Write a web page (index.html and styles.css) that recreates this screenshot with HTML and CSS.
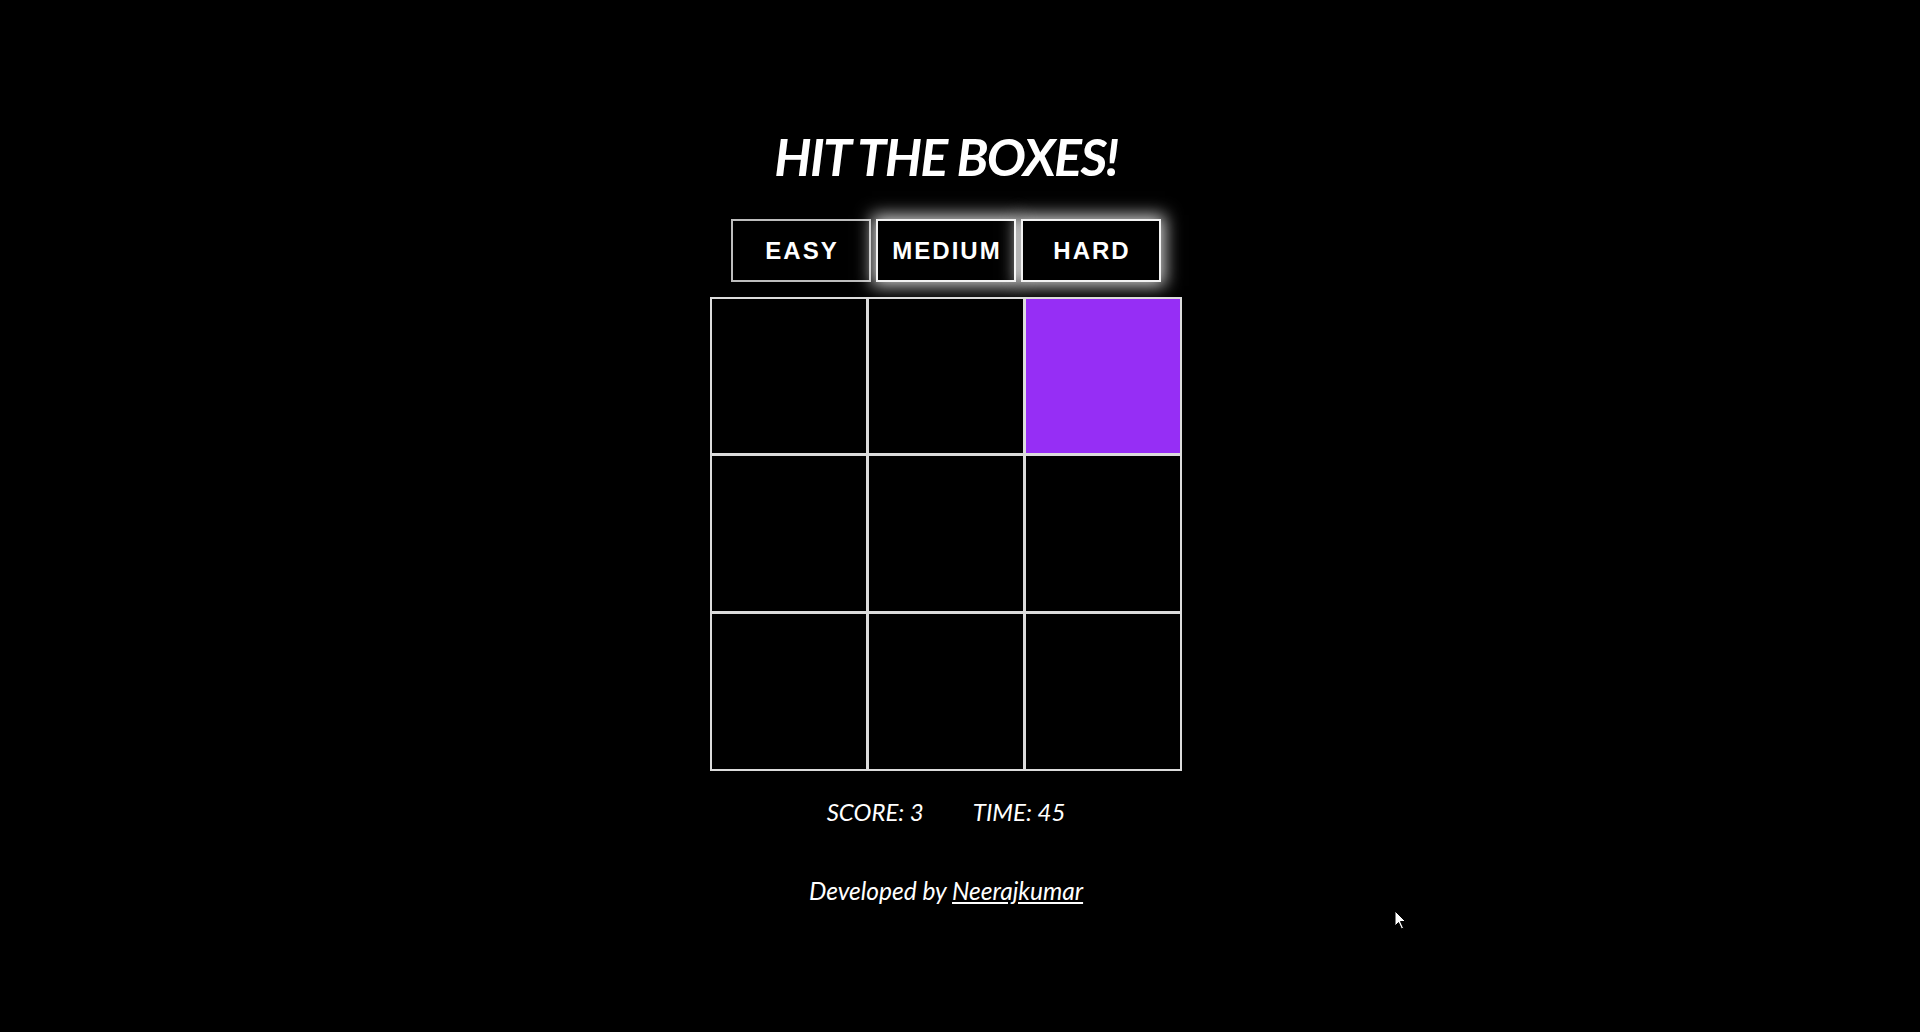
FILE: index.html
```html
<!DOCTYPE html>
<html lang="en">
<head>
<meta charset="utf-8">
<title>Hit the Boxes!</title>
<link rel="stylesheet" href="styles.css">
</head>
<body>
<main class="game">
  <h1 class="title">HIT THE BOXES!</h1>
  <div class="levels">
    <button class="level">EASY</button>
    <button class="level glow">MEDIUM</button>
    <button class="level glow">HARD</button>
  </div>
  <div class="board">
    <div class="cell"></div>
    <div class="cell"></div>
    <div class="cell active"></div>
    <div class="cell"></div>
    <div class="cell"></div>
    <div class="cell"></div>
    <div class="cell"></div>
    <div class="cell"></div>
    <div class="cell"></div>
  </div>
  <div class="stats">
    <span class="stat">SCORE: 3</span>
    <span class="stat">TIME: 45</span>
  </div>
  <p class="credit">Developed by <a href="#" class="author">Neerajkumar</a></p>
</main>
<svg class="cursor" width="13" height="20" viewBox="0 0 13 20" aria-hidden="true">
  <path d="M1 1 L1 16 L4.5 12.5 L7.5 19 L9.5 18 L6.5 11.5 L11.5 11.5 Z" fill="#fff" stroke="#000" stroke-width="1"/>
</svg>
</body>
</html>
```

FILE: styles.css
```css
html, body {
  margin: 0;
  padding: 0;
  background: #000;
  height: 100%;
  overflow: hidden;
}

body {
  color: #fff;
  font-family: Lato, "Open Sans", sans-serif;
}

.game {
  display: flex;
  flex-direction: column;
  align-items: center;
  padding-top: 125px;
  padding-right: 28px;
}

.title {
  margin: 0;
  font-size: 52px;
  line-height: 63px;
  font-weight: 700;
  font-style: italic;
  letter-spacing: -1.6px;
  color: #fff;
}

.levels {
  display: flex;
  gap: 5px;
  margin-top: 31px;
}

.level {
  width: 140px;
  height: 63px;
  display: flex;
  align-items: center;
  justify-content: center;
  background: #000;
  color: #fff;
  border: 2px solid #bdbdbd;
  font-family: "Liberation Sans", Arial, sans-serif;
  font-weight: 700;
  font-size: 24px;
  letter-spacing: 2px;
  padding: 0 0 0 2px;
  margin: 0;
  cursor: pointer;
}

.level.glow {
  border-color: #f2f2f2;
  box-shadow: 0 0 16px 4px rgba(255, 255, 255, 0.8);
}

.board {
  margin-top: 15px;
  display: grid;
  grid-template-columns: repeat(3, 154px);
  grid-template-rows: 154px 155px 155px;
  gap: 3px;
  padding: 2px;
  background: #dcdcdc;
}

.cell {
  background: #000;
}

.cell.active {
  background: #962ef5;
}

.stats {
  margin-top: 26px;
  display: flex;
  gap: 49px;
  font-size: 24px;
  font-style: italic;
  line-height: 29px;
}

.credit {
  margin: 50px 0 0;
  font-size: 24.5px;
  font-style: italic;
  line-height: 29px;
}

.author {
  color: #fff;
  text-decoration: underline;
}

.cursor {
  position: absolute;
  left: 1394px;
  top: 910px;
}
```
